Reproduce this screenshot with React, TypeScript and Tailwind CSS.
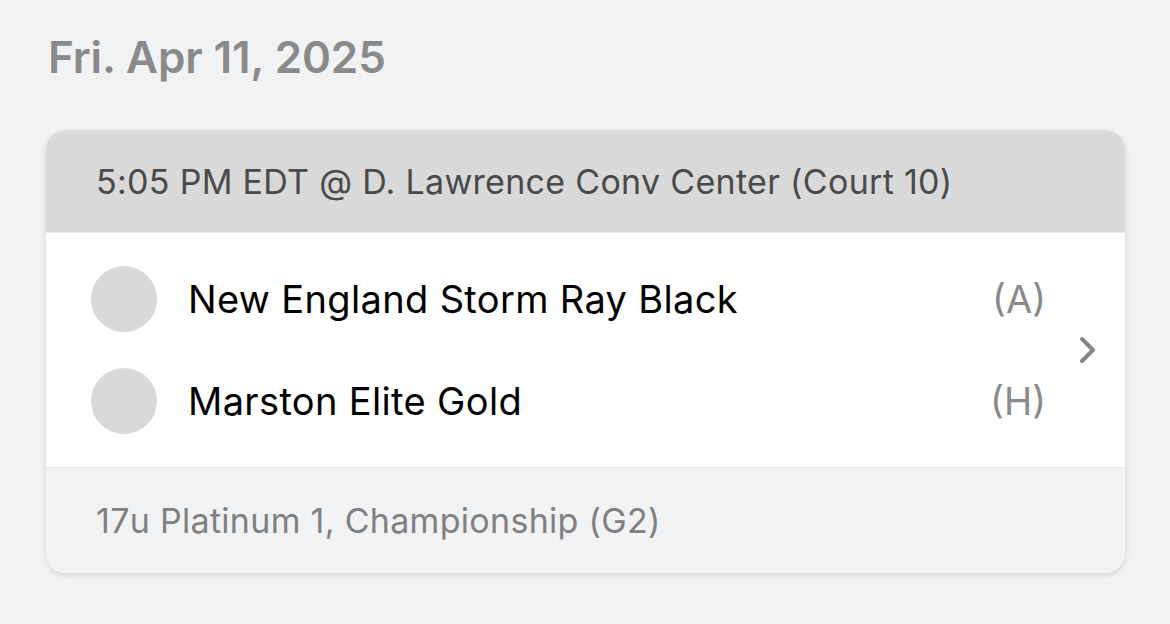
import { useState } from 'react';

interface Team {
  id: number;
  name: string;
  side: string;
}

const teams: Team[] = [
  { id: 1, name: 'New England Storm Ray Black', side: '(A)' },
  { id: 2, name: 'Marston Elite Gold', side: '(H)' },
];

export default function App() {
  const [open, setOpen] = useState(false);

  return (
    <div
      className="min-h-[624px] w-full bg-[#f1f2f4] pl-[46px] pr-[45px] pt-[33px]"
      style={{ fontFamily: 'Inter, "Noto Sans", sans-serif' }}
    >
      {/* Date heading */}
      <h1 className="pl-[2px] text-[44px] font-semibold leading-[48px] text-[#8a8a8a] tracking-[-0.1px]">
        Fri. Apr 11, 2025
      </h1>

      {/* Game card */}
      <div
        onClick={() => setOpen(!open)}
        className="mt-[49px] w-[1079px] overflow-hidden rounded-[20px] bg-white shadow-[0_2px_6px_rgba(0,0,0,0.12)] cursor-pointer"
      >
        <div className="flex h-[103px] items-center bg-[#d9d9d9] pl-[50px] border-b border-[#e9e9e9]">
          <span className="text-[34px] text-[#4a4a4a] tracking-[0.3px]">
            5:05 PM EDT @ D. Lawrence Conv Center (Court 10)
          </span>
        </div>

        <div className="flex items-center bg-white py-[33px] pl-[45px] pr-[27px]">
          <div className="flex flex-1 flex-col gap-[36px]">
            {teams.map((team) => (
              <div key={team.id} className="flex h-[66px] items-center">
                <div className="h-[66px] w-[66px] shrink-0 rounded-full bg-[#d9d9d9]" />
                <span className="ml-[31px] flex-1 text-[38px] text-black tracking-[0.35px]">
                  {team.name}
                </span>
                <span className="text-[38px] text-[#8a8a8a]">{team.side}</span>
              </div>
            ))}
          </div>
          <svg
            width="20"
            height="32"
            viewBox="0 0 20 32"
            fill="none"
            className="ml-[32px]"
          >
            <polyline
              points="4,5 15,16 4,27"
              stroke="#858585"
              strokeWidth="4"
              strokeLinecap="round"
              strokeLinejoin="round"
            />
          </svg>
        </div>

        <div className="flex h-[106px] items-center border-t border-[#e6e6e6] bg-[#f1f2f4] pl-[50px]">
          <span className="text-[34px] text-[#808080] tracking-[0.3px]">
            17u Platinum 1, Championship (G2)
          </span>
        </div>
      </div>
    </div>
  );
}
